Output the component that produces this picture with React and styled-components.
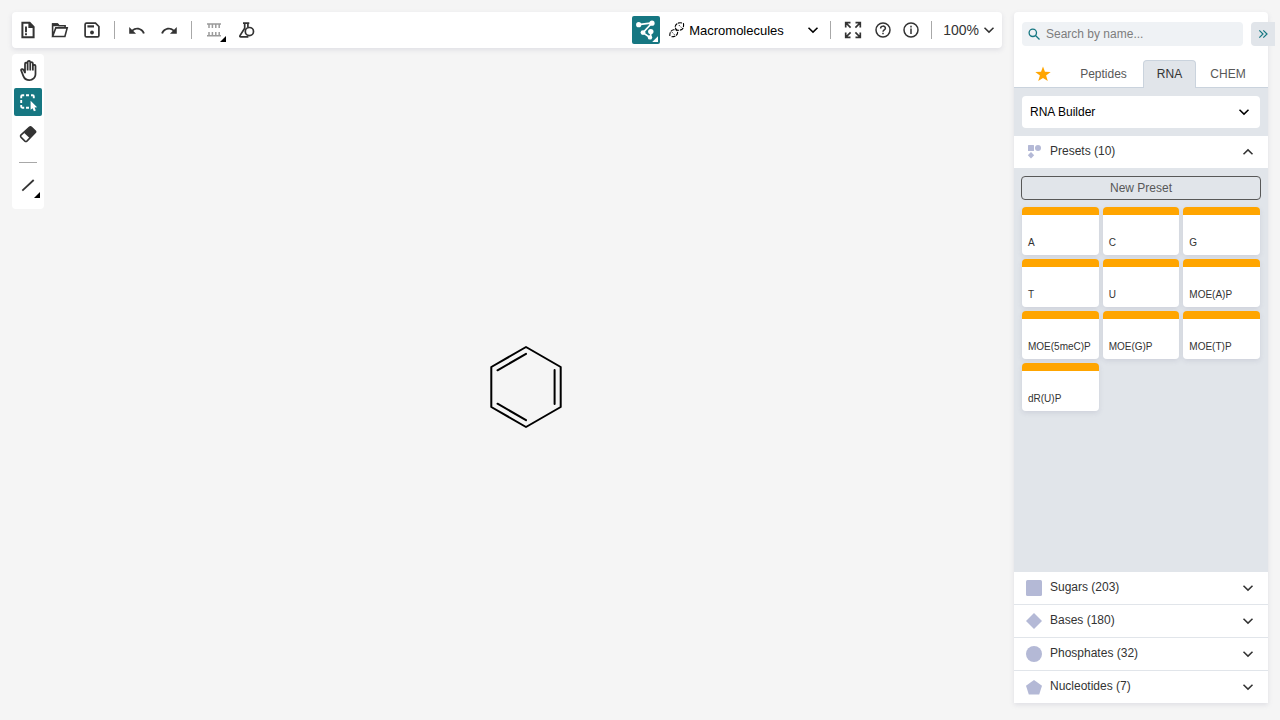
import React from 'react';
import styled, { createGlobalStyle, css } from 'styled-components';
import { MdOutlineBackHand } from 'react-icons/md';

const teal = '#167782';
const ink = '#333333';
const panel = '#e1e5ea';
const lilac = '#b4b9d6';
const amber = '#ffa500';

const GlobalStyle = createGlobalStyle`
  *, *::before, *::after { box-sizing: border-box; }
  body {
    margin: 0;
    background: #f5f5f5;
    color: ${ink};
    font-family: "Liberation Sans", Arial, sans-serif;
    font-size: 12px;
  }
  button, input, select { font: inherit; color: inherit; }
  svg { display: block; flex: none; }
`;

const Page = styled.div`
  display: grid;
  grid-template-columns: minmax(0, 1fr) 254px;
  gap: 12px;
  min-height: 100vh;
  padding: 12px 12px 0;
`;

const Editor = styled.main`
  display: flex;
  flex-direction: column;
  gap: 6px;
`;

const TopBar = styled.header`
  display: flex;
  align-items: center;
  gap: 4px;
  height: 36px;
  padding: 0 2px;
  background: #fff;
  border-radius: 4px;
  box-shadow: 0 2px 5px rgba(103, 104, 132, 0.15);
`;

const Spacer = styled.div`
  flex: 1;
`;

const Group = styled.div`
  display: flex;
  align-items: center;
`;

const ViewGroup = styled(Group)`
  gap: 2px;
  margin-right: -2px;
`;

const Divider = styled.span`
  background: #a8a8a8;
  ${({ $horizontal }) =>
    $horizontal
      ? css`width: 18px; height: 1px; margin: 10px 0 5px;`
      : css`width: 1px; height: 18px; margin: 0 4px;`}
`;

const ToolButton = styled.button`
  position: relative;
  flex: none;
  display: flex;
  align-items: center;
  justify-content: center;
  width: 28px;
  height: 28px;
  padding: 0;
  border: 0;
  border-radius: 2px;
  background: ${({ $active }) => ($active ? teal : 'transparent')};
  color: ${({ $active, $muted }) => ($active ? '#fff' : $muted ? '#9b9b9b' : ink)};
`;

const Corner = styled.span`
  position: absolute;
  right: 2px;
  bottom: 2px;
  width: 6px;
  height: 6px;
  background: ${({ $light }) => ($light ? '#fff' : '#000')};
  clip-path: polygon(100% 0, 100% 100%, 0 100%);
`;

const ModeField = styled.label`
  display: grid;
  grid-template-columns: 16px 1fr 12px;
  align-items: center;
  width: 150px;
  margin: 0 3px 0 5px;
  color: #000;
`;

const ModeSelect = styled.select`
  grid-area: 1 / 1 / 2 / 4;
  appearance: none;
  height: 28px;
  padding: 0 16px 0 20px;
  border: 0;
  background: transparent;
  font-size: 13px;
`;

const FieldIcon = styled.span`
  grid-row: 1;
  grid-column: ${({ $end }) => ($end ? 3 : 1)};
  pointer-events: none;
`;

const ZoomButton = styled.button`
  display: flex;
  align-items: center;
  gap: 4px;
  height: 28px;
  margin-left: 3px;
  padding: 0 5px 0 0;
  border: 0;
  background: transparent;
  font-size: 14px;
`;

const Workspace = styled.div`
  flex: 1;
  display: flex;
  align-items: stretch;
  gap: 6px;
`;

const SideTools = styled.nav`
  align-self: flex-start;
  display: flex;
  flex-direction: column;
  align-items: center;
  gap: 4px;
  padding: 2px 2px 9px;
  background: #fff;
  border-radius: 4px;
`;

const Canvas = styled.section`
  flex: 1;
  display: flex;
  align-items: center;
  justify-content: center;
`;

const Library = styled.aside`
  display: flex;
  flex-direction: column;
  margin-bottom: 17px;
  background: #fff;
  border-radius: 4px 4px 0 0;
  box-shadow: 0 2px 5px rgba(103, 104, 132, 0.15);
`;

const SearchRow = styled.div`
  display: flex;
  gap: 8px;
  margin: 10px -7px 14px 8px;
`;

const SearchField = styled.label`
  flex: 1;
  display: flex;
  align-items: center;
  gap: 6px;
  min-width: 0;
  height: 24px;
  padding: 0 6px;
  border-radius: 4px;
  background: #eff2f5;
  color: ${teal};
`;

const SearchInput = styled.input`
  flex: 1;
  min-width: 0;
  padding: 0;
  border: 0;
  background: transparent;
  color: ${ink};
  &::placeholder { color: #7d7d7d; opacity: 1; }
`;

const CollapseButton = styled.button`
  display: flex;
  align-items: center;
  justify-content: center;
  width: 24px;
  height: 24px;
  padding: 0;
  border: 0;
  border-radius: 4px 0 0 4px;
  background: ${panel};
  color: ${teal};
`;

const Tabs = styled.div`
  display: grid;
  grid-template-columns: 42fr 79fr 53fr 64fr;
  height: 28px;
  padding: 0 8px;
  box-shadow: inset 0 -1px 0 #cad3dd;
`;

const Tab = styled.button`
  display: flex;
  align-items: center;
  justify-content: center;
  padding: 0 0 2px;
  border: 1px solid transparent;
  border-bottom: 0;
  border-radius: 4px 4px 0 0;
  background: transparent;
  color: #585858;
  ${({ $active }) =>
    $active && css`
      background: ${panel};
      border-color: #cad3dd;
      color: ${ink};
    `}
`;

const BuilderBar = styled.div`
  padding: 8px;
  background: ${panel};
`;

const BuilderButton = styled.button`
  display: flex;
  align-items: center;
  justify-content: space-between;
  width: 100%;
  height: 32px;
  padding: 0 10px 0 8px;
  border: 0;
  border-radius: 4px;
  background: #fff;
  color: #000;
`;

const GroupHeader = styled.button`
  display: flex;
  align-items: center;
  gap: 8px;
  flex: none;
  width: 100%;
  height: ${({ $ruled }) => ($ruled ? 33 : 32)}px;
  padding: 0 14px 0 12px;
  border: 0;
  border-bottom: ${({ $ruled }) => ($ruled ? `1px solid ${panel}` : '0')};
  background: #fff;
`;

const GroupName = styled.span`
  flex: 1;
  padding-bottom: 2px;
  text-align: left;
`;

const PresetArea = styled.div`
  flex: 1;
  display: flex;
  flex-direction: column;
  gap: 7px;
  padding: 8px 7px;
  background: ${panel};
`;

const NewPresetButton = styled.button`
  height: 24px;
  padding: 0;
  border: 1px solid #585858;
  border-radius: 4px;
  background: transparent;
  color: #585858;
`;

const PresetGrid = styled.div`
  display: grid;
  grid-template-columns: repeat(3, minmax(0, 1fr));
  grid-auto-rows: 48px;
  gap: 4px;
  padding: 0 1px;
`;

const PresetCard = styled.button`
  display: flex;
  align-items: flex-end;
  padding: 0 6px 6px;
  border: 0;
  border-radius: 4px;
  background: linear-gradient(${amber} 8px, #fff 8px);
  box-shadow: 0 2px 5px rgba(103, 104, 132, 0.15);
  font-size: 10px;
  line-height: 12px;
  text-align: left;
`;

const Icon = ({ children, size = 28, box = size, fill = 'none', width = 2 }) => (
  <svg
    width={size}
    height={size}
    viewBox={`0 0 ${box} ${box}`}
    fill={fill}
    stroke={fill === 'none' ? 'currentColor' : 'none'}
    strokeWidth={width}
    aria-hidden="true"
  >
    {children}
  </svg>
);

const Chevron = ({ up }) => (
  <Icon size={12} width={1.5}>
    <path d={up ? 'M1.5 8.3 6 3.9l4.5 4.4' : 'M1.5 3.7 6 8.1l4.5-4.4'} />
  </Icon>
);

const NewIcon = () => (
  <Icon width={2}>
    <path d="M8.4 6.7h7.2l4 4.1v10.4H8.4z" />
    <path d="M14.4 6v6h6l-4.8-6z" fill="currentColor" stroke="none" />
    <path d="M12 10.4v5.8M12 17.3v1.9" strokeWidth="1.9" />
  </Icon>
);

const OpenIcon = () => (
  <Icon width={1.6}>
    <path d="M6.6 20.3V8h5l1.5 1.7h6v2.2M6.6 20.5l3.2-8.6h11.4l-2.3 8.6z" />
    <path d="M6 7.2h5.4l1.6 1.7v1.4H6z" fill="currentColor" stroke="none" />
  </Icon>
);

const SaveIcon = () => (
  <Icon width={1.7}>
    <path d="M8.5 7.1h9l3.4 3.4v9q0 1.4-1.4 1.4h-11q-1.4 0-1.4-1.4v-11q0-1.4 1.4-1.4z" />
    <path d="M9.4 10.4h6.6" strokeWidth="2.2" />
    <circle cx="14" cy="16.5" r="1.9" fill="currentColor" stroke="none" />
  </Icon>
);

const ArcArrow = ({ redo }) => (
  <Icon fill="currentColor">
    <path
      transform={redo ? 'translate(23.3 5.6) scale(-.76 .76)' : 'translate(4.7 5.6) scale(.76)'}
      d="M12.5 8c-2.65 0-5.05.99-6.9 2.6L2 7v9h9l-3.62-3.62c1.39-1.16 3.16-1.88 5.12-1.88 3.54 0 6.55 2.31 7.6 5.5l2.37-.78C21.08 11.03 17.15 8 12.5 8z"
    />
  </Icon>
);

const ChainIcon = () => (
  <Icon width={1.5}>
    <path d="M7 8h14M7 19.7h14M9 8v4M12.4 8v4M15.8 8v4M19.2 8v4M9 16v4M12.4 16v4M15.8 16v4M19.2 16v4" />
  </Icon>
);

const FlaskIcon = () => (
  <Icon width={1.7}>
    <path d="M11 7.1h6.3M12.7 7v5.2L8 19.6q-.6 1.3.8 1.3h7.6M15.9 7v4" />
    <circle cx="17.4" cy="15.6" r="4.1" />
  </Icon>
);

const MoleculeIcon = () => (
  <Icon width={1.7}>
    <path d="M6.7 8.7 20 7l-9 9.7 7.3 5.1.7-5.8" />
    <g fill="currentColor" stroke="none">
      <circle cx="6.7" cy="8.7" r="2.6" />
      <circle cx="20" cy="7.2" r="2.6" />
      <circle cx="11" cy="16.6" r="2.4" />
      <circle cx="18.8" cy="15.6" r="2.7" />
      <circle cx="18" cy="21.4" r="2.2" />
    </g>
  </Icon>
);

const DnaIcon = () => (
  <Icon size={16} width={1.1}>
    <path strokeDasharray="4 .8" d="M14.4 1.2C15.2 5 14 8 10.6 8.2 8.4 8.3 7 7.6 4.5 7.8 1.6 8.4.4 11 .9 14.6" />
    <path strokeDasharray="4 .8" d="M13 1C9.6.2 6.6 1.6 6.2 4.6 6 7 8.8 8.2 8.6 10.8 8.2 13.6 5.6 14.8 2.4 14.8" />
    <path strokeWidth=".8" d="M9.8 3l3 3M3 10.2l3 3" strokeDasharray="1.4 .9" />
  </Icon>
);

const ExpandIcon = () => (
  <Icon width={1.7}>
    <path d="M11.6 11.6 7 7M16.4 11.6 21 7M11.6 16.4 7 21M16.4 16.4 21 21M6.7 11.5V6.7h4.8M16.5 6.7h4.8v4.8M6.7 16.5v4.8h4.8M16.5 21.3h4.8v-4.8" />
  </Icon>
);

const HelpIcon = () => (
  <Icon width={1.5}>
    <circle cx="14" cy="14" r="7" />
    <path d="M11.6 12.4c0-3 4.8-3 4.8-.2 0 1.7-2.4 1.8-2.4 3.6M14 16.7v1.6" />
  </Icon>
);

const InfoIcon = () => (
  <Icon width={1.5}>
    <circle cx="14" cy="14" r="7" />
    <path d="M14 12.6v5.4M14 9.8v1.6" />
  </Icon>
);

const MarqueeIcon = () => (
  <Icon width={1.9}>
    <path d="M7.2 10.2V8.4q0-1.2 1.2-1.2h1.8M12 7.2h3M17 7.2h1.6q1.2 0 1.2 1.2v1.8M7.2 12v3M7.2 17v1.6q0 1.2 1.2 1.2h1.8M12 19.8h3" />
    <path d="M16.6 12.8v9l2-1.6 1.3 3 1.9-.8-1.2-2.9 2.5-.3z" fill="currentColor" stroke="none" />
  </Icon>
);

const EraserIcon = () => (
  <Icon width={1.6}>
    <path d="M17.2 7.2 21.3 11q.7.7 0 1.4l-8.4 8.7q-1 .8-2 0l-4-4q-.8-1 0-2L15.6 7.2q.8-.7 1.6 0z" />
    <path d="M16.4 6.4 22 11.7l-6.2 6.6-5.8-5.6z" fill="currentColor" stroke="none" />
  </Icon>
);

const BondIcon = () => (
  <Icon width={1.8}>
    <path d="M8.3 18.7 19.7 8" />
  </Icon>
);

const shapes = {
  presets: (
    <>
      <rect x="2" y="1" width="6" height="6" rx=".5" />
      <circle cx="12" cy="4" r="3" />
      <path d="m5 8 3.2 3.3L5 14.6l-3.2-3.3z" />
    </>
  ),
  sugar: <rect width="16" height="16" rx="1.5" />,
  base: <path d="m8 0 8 8-8 8-8-8z" />,
  phosphate: <circle cx="8" cy="8" r="8" />,
  nucleotide: <path d="m8 1 8 5.8-2.8 8.8H2.8L0 6.8z" />,
};

const ShapeIcon = ({ name }) => (
  <Icon size={16} fill={lilac}>{shapes[name]}</Icon>
);

const Benzene = () => (
  <svg width="76" height="86" viewBox="488 344 76 86" fill="none" stroke="#000" strokeWidth="2" strokeLinecap="round" role="img" aria-label="Benzene ring">
    <path strokeLinejoin="round" d="M526 347l34.7 20v40l-34.7 20-34.7-20v-40z" />
    <path d="M497.5 370.3 526 353.8M554.6 370v34M497.5 403.7 526 420.2" />
  </svg>
);

const presets = ['A', 'C', 'G', 'T', 'U', 'MOE(A)P', 'MOE(5meC)P', 'MOE(G)P', 'MOE(T)P', 'dR(U)P'];

const groups = [
  ['sugar', 'Sugars (203)'],
  ['base', 'Bases (180)'],
  ['phosphate', 'Phosphates (32)'],
  ['nucleotide', 'Nucleotides (7)'],
];

export default function App() {
  return (
    <>
      <GlobalStyle />
      <Page>
        <Editor>
          <TopBar>
            <ToolButton aria-label="New"><NewIcon /></ToolButton>
            <ToolButton aria-label="Open"><OpenIcon /></ToolButton>
            <ToolButton aria-label="Save"><SaveIcon /></ToolButton>
            <Divider />
            <ToolButton aria-label="Undo"><ArcArrow /></ToolButton>
            <ToolButton aria-label="Redo"><ArcArrow redo /></ToolButton>
            <Divider />
            <ToolButton aria-label="Sequence layout" $muted><ChainIcon /><Corner /></ToolButton>
            <ToolButton aria-label="Calculate properties"><FlaskIcon /></ToolButton>
            <Spacer />
            <ToolButton aria-label="View mode" $active><MoleculeIcon /><Corner $light /></ToolButton>
            <ModeField>
              <ModeSelect aria-label="Editor mode" defaultValue="macro">
                <option value="macro">Macromolecules</option>
                <option value="micro">Molecules</option>
              </ModeSelect>
              <FieldIcon><DnaIcon /></FieldIcon>
              <FieldIcon $end><Chevron /></FieldIcon>
            </ModeField>
            <Divider />
            <ViewGroup>
              <ToolButton aria-label="Fullscreen"><ExpandIcon /></ToolButton>
              <Group>
                <ToolButton aria-label="Help"><HelpIcon /></ToolButton>
                <ToolButton aria-label="About"><InfoIcon /></ToolButton>
              </Group>
            </ViewGroup>
            <Divider />
            <ZoomButton>100%<Chevron /></ZoomButton>
          </TopBar>
          <Workspace>
            <SideTools>
              <ToolButton aria-label="Hand tool"><MdOutlineBackHand size={21} /></ToolButton>
              <ToolButton aria-label="Select" $active><MarqueeIcon /></ToolButton>
              <ToolButton aria-label="Erase"><EraserIcon /></ToolButton>
              <Divider $horizontal />
              <ToolButton aria-label="Bond"><BondIcon /><Corner /></ToolButton>
            </SideTools>
            <Canvas><Benzene /></Canvas>
          </Workspace>
        </Editor>
        <Library>
          <SearchRow>
            <SearchField>
              <Icon size={12} width={1.3}>
                <circle cx="4.8" cy="4.8" r="3.7" />
                <path d="m7.5 7.5 4 4" />
              </Icon>
              <SearchInput type="text" placeholder="Search by name..." aria-label="Search by name" />
            </SearchField>
            <CollapseButton aria-label="Hide library">
              <Icon size={12} width={1.2}>
                <path d="M2.3 2.3 6 6 2.3 9.7M6.3 2.3 10 6 6.3 9.7" />
              </Icon>
            </CollapseButton>
          </SearchRow>
          <Tabs role="tablist">
            <Tab role="tab" aria-label="Favorites">
              <Icon size={16} box={14} fill={amber}>
                <path d="m7 .4 1.7 4.7 5 .1-4 3.1 1.5 4.9L7 10.4l-4.2 2.8 1.5-4.9-4-3.1 5-.1z" />
              </Icon>
            </Tab>
            <Tab role="tab">Peptides</Tab>
            <Tab role="tab" aria-selected="true" $active>RNA</Tab>
            <Tab role="tab">CHEM</Tab>
          </Tabs>
          <BuilderBar>
            <BuilderButton aria-expanded="false">RNA Builder<Chevron /></BuilderButton>
          </BuilderBar>
          <GroupHeader aria-expanded="true">
            <ShapeIcon name="presets" />
            <GroupName>Presets (10)</GroupName>
            <Chevron up />
          </GroupHeader>
          <PresetArea>
            <NewPresetButton>New Preset</NewPresetButton>
            <PresetGrid>
              {presets.map((name) => (
                <PresetCard key={name}>{name}</PresetCard>
              ))}
            </PresetGrid>
          </PresetArea>
          {groups.map(([shape, label], i) => (
            <GroupHeader key={label} aria-expanded="false" $ruled={i < groups.length - 1}>
              <ShapeIcon name={shape} />
              <GroupName>{label}</GroupName>
              <Chevron />
            </GroupHeader>
          ))}
        </Library>
      </Page>
    </>
  );
}
